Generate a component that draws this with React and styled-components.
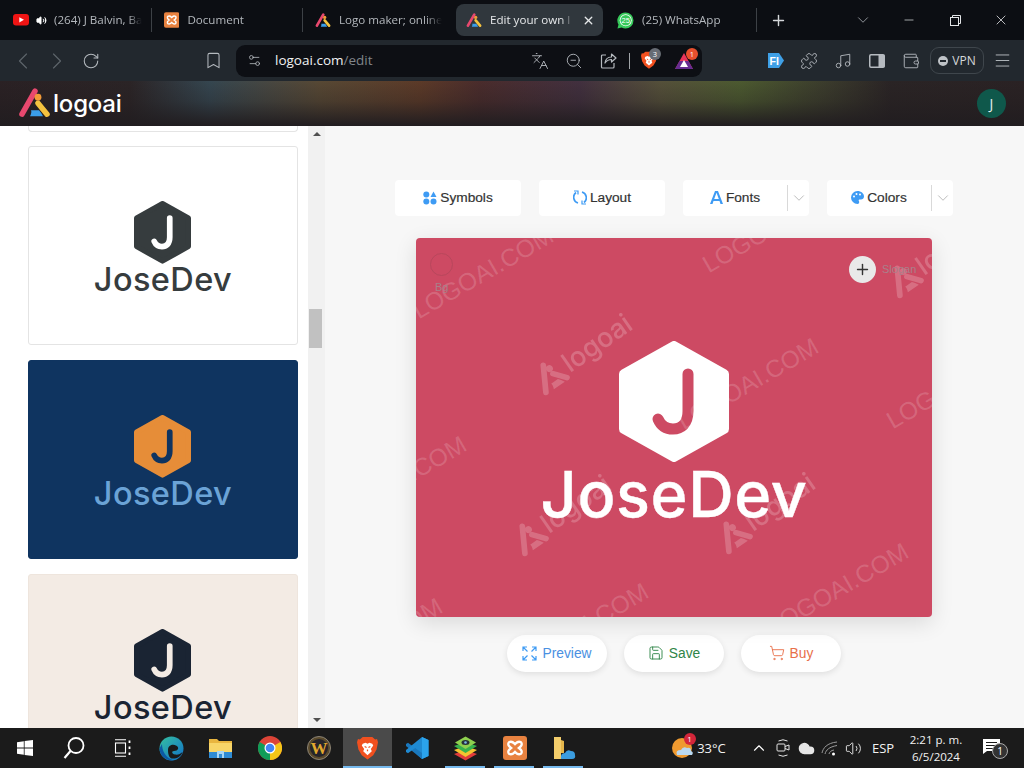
import React from "react";
import styled, { createGlobalStyle } from "styled-components";
import {
  ChevronLeft, ChevronRight, RotateCw, Bookmark, Settings2, Languages, ZoomOut, Puzzle, Music,
  Wallet, Menu, Plus, ChevronDown, Minus, X, Save, ShoppingCart, ChevronUp, Cloud, Volume2,
} from "lucide-react";

const Global = createGlobalStyle`
  html, body { margin: 0; padding: 0; background: #111; }
  * { box-sizing: border-box; }
  body { font-family: "Open Sans", "Liberation Sans", sans-serif; }
`;

const Page = styled.div`
  width: 1024px; height: 768px; display: flex; flex-direction: column; overflow: hidden;
`;

/* ---------- tab strip ---------- */
const TabBar = styled.div`
  height: 40px; flex: none; background: #0c0e13; display: flex; align-items: center; color: #b9bdc2;
`;
const Tab = styled.div`
  position: relative; height: 32px; flex: none; width: ${p => p.$w}px; padding-left: ${p => p.$pad}px;
  display: flex; align-items: center; gap: 8px; font-size: 11.6px; border-radius: 8px;
  background: ${p => (p.$active ? "#30373d" : "transparent")};
  color: ${p => (p.$active ? "#e6e8ea" : "#b4b8bd")};
  ${p => p.$sep && `&::after { content: ""; position: absolute; right: 0; top: 4px; bottom: 4px; width: 1px; background: #3d4146; }`}
`;
const TabTitle = styled.span`
  white-space: nowrap; overflow: hidden; width: ${p => p.$w}px; margin-top: -2px;
  mask-image: linear-gradient(to right, #000 84%, transparent);
`;
const Speaker = styled.span`display: flex; margin-left: -1px; margin-right: -1px;`;
const TabClose = styled.span`display: flex; color: #e6e8ea; margin-left: 0;`;
const PlusSlot = styled.div`
  width: 42px; flex: none; display: flex; justify-content: center; color: #d5d7da;
`;
const WinControls = styled.div`margin-left: auto; display: flex; color: #dfe1e3;`;
const WinButton = styled.div`
  width: 46px; height: 40px; display: flex; align-items: center; justify-content: center;
  color: ${p => (p.$dim ? "#a9adb2" : "#e4e6e8")};
`;

/* ---------- browser toolbar ---------- */
const Toolbar = styled.div`
  height: 41px; flex: none; background: #22282e; display: flex; align-items: center; padding-left: 6px; color: #b5babf;
`;
const IconSlot = styled.div`
  width: 34px; height: 32px; flex: none; display: flex; align-items: center; justify-content: center;
  color: ${p => (p.$dim ? "#5d646a" : "inherit")};
`;
const BookmarkSlot = styled(IconSlot)`margin-left: 88px;`;
const UrlBar = styled.div`
  width: 466px; height: 32px; margin-left: 6px; flex: none; background: #0d0f14; border-radius: 9px;
  display: flex; align-items: center; padding-left: 1px; position: relative;
`;
const UrlText = styled.div`font-size: 13.5px; color: #f1f2f3; margin: -2px 0 0 4px; flex: 1;`;
const UrlPath = styled.span`color: #80858a;`;
const UrlDivider = styled.div`width: 1px; height: 16px; background: #a0a4a8; margin: 0 1px 0 4px;`;
const BadgeWrap = styled.div`position: relative; width: 35px; height: 32px; display: flex; align-items: center; justify-content: center; flex: none;`;
const CountBadge = styled.span`
  position: absolute; top: 3px; right: ${p => p.$r}px; width: 12px; height: 12px; border-radius: 50%;
  background: ${p => p.$bg}; color: #fff; font-size: 7.5px; line-height: 12px; text-align: center;
`;
const UrlEnd = styled.div`width: 1px; flex: none;`;
const ToolRight = styled.div`margin-left: auto; display: flex; align-items: center; padding-right: 5px;`;
const VpnPill = styled.div`
  width: 54px; height: 27px; margin: 0 1px 0 2px; border: 1px solid #3f464c; border-radius: 9px; display: flex; align-items: center;
  justify-content: center; gap: 4px; font-size: 12px; color: #d6d8da;
`;
const VpnDot = styled.span`
  width: 10px; height: 10px; border-radius: 50%; background: #bfc3c7; display: flex; align-items: center; justify-content: center;
  &::after { content: ""; width: 6px; height: 2px; background: #22282e; }
`;

/* ---------- site header ---------- */
const SiteHeader = styled.header`
  height: 45px; flex: none; display: flex; align-items: center; justify-content: space-between;
  padding: 0 18px 0 18px;
  background:
    linear-gradient(to bottom, rgba(30,26,28,0) 0%, rgba(30,26,28,.25) 45%, #211d20 100%),
    linear-gradient(to right, #2a2124 0%, #2b2426 130px, #354650 210px, #574834 320px, #5c3a28 420px, #4a2c2c 480px, #42303f 580px, #55503a 660px, #4c5a30 740px, #3a3a2c 830px, #2a2425 890px, #2a2224 100%);
`;
const Brand = styled.div`display: flex; align-items: center; gap: 2px;`;
const BrandName = styled.span`
  font-family: Inter, sans-serif; font-size: 24px; font-weight: 500; color: #fff; line-height: 1; letter-spacing: -.2px; margin-top: 2px;
`;
const Avatar = styled.div`
  width: 29px; height: 29px; border-radius: 50%; background: #0f584b; color: #e8f0ee; font-size: 14px;
  display: flex; align-items: center; justify-content: center;
`;

/* ---------- main area ---------- */
const Main = styled.main`flex: 1; min-height: 0; display: flex; overflow: hidden; background: #f7f7f7;`;
const Sidebar = styled.aside`
  width: 308px; flex: none; background: #fff; padding-left: 28px; display: flex; flex-direction: column; gap: 15px;
`;
const ClippedCard = styled.div`
  width: 270px; height: 6px; margin-bottom: -1px; flex: none; border: 1px solid #e4e4e4; border-top: 0; border-radius: 0 0 4px 4px; background: #fff;
`;
const Card = styled.div`
  width: 270px; height: 199px; flex: none; border-radius: 3px; display: flex; align-items: center; justify-content: center;
  background: ${p => p.$bg}; border: 1px solid ${p => p.$border};
`;
const Scrollbar = styled.div`
  width: 17px; flex: none; background: #f1f1f1; display: flex; flex-direction: column; align-items: center; justify-content: space-between;
  position: relative;
`;
const ScrollArrow = styled.div`
  width: 0; height: 0; margin: 6px 0; border-left: 4px solid transparent; border-right: 4px solid transparent;
  ${p => (p.$down ? "border-top: 4px solid #505050;" : "border-bottom: 4px solid #505050;")}
`;
const ScrollThumb = styled.div`
  position: absolute; top: 183px; left: 1px; width: 13px; height: 39px; background: #c1c1c1;
`;
const Editor = styled.section`
  flex: 1; display: flex; flex-direction: column; align-items: center; padding-top: 54px;
`;
const ToolRow = styled.div`display: flex; gap: 18px; margin-left: -1px;`;
const ToolBtn = styled.div`
  width: 126px; height: 36px; background: #fff; border-radius: 4px; display: flex; align-items: center;
  font-family: "Liberation Sans", sans-serif; font-size: 13.7px; color: #333; -webkit-text-stroke: .2px #333;
`;
const ToolLabel = styled.div`flex: 1; display: flex; align-items: center; justify-content: center; gap: 3px; padding-bottom: 1px;`;
const ToolCaret = styled.div`
  width: 22px; height: 26px; border-left: 1px solid #d9d9d9; display: flex; align-items: center; justify-content: center; color: #b5b5b5;
`;
const Canvas = styled.div`
  position: relative; width: 516px; height: 379px; margin: 22px 0 18px -1px; background: #cd4a63; border-radius: 4px; overflow: hidden;
  display: flex; align-items: center; justify-content: center;
  box-shadow: 0 6px 22px rgba(0,0,0,.12);
`;
const WatermarkText = styled.span`
  position: absolute; left: ${p => p.$x}px; top: ${p => p.$y}px; font-family: "Liberation Sans", sans-serif; font-size: 24.5px;
  color: rgba(255,255,255,.17); transform: rotate(-30deg); transform-origin: 0 100%; white-space: nowrap; line-height: 1;
`;
const WatermarkLogo = styled.div`
  position: absolute; left: ${p => p.$x}px; top: ${p => p.$y}px; display: flex; align-items: center; gap: 1px; opacity: .2;
  transform: rotate(-35deg); transform-origin: 0 100%; color: #fff; font-family: Inter, sans-serif; font-weight: 500; font-size: 27px; line-height: 1; white-space: nowrap;
`;
const BgSwatch = styled.div`
  position: absolute; left: 14px; top: 15px; width: 23px; height: 23px; border-radius: 50%; border: 1px solid #b8475c;
`;
const BgLabel = styled.span`
  position: absolute; left: 19px; top: 43px; font-family: "Liberation Sans", sans-serif; font-size: 11px; color: #a9808a;
`;
const AddCircle = styled.div`
  position: absolute; left: 433px; top: 18px; width: 27px; height: 27px; border-radius: 50%; background: #e9e9e9; color: #333;
  display: flex; align-items: center; justify-content: center;
`;
const SloganLabel = styled.span`
  position: absolute; left: 466px; top: 25px; font-family: "Liberation Sans", sans-serif; font-size: 11px; color: #a9808a;
`;
const ActionRow = styled.div`display: flex; gap: 17px; margin-left: -1px;`;
const ActionBtn = styled.div`
  width: 100px; height: 37px; border-radius: 19px; background: #fff; box-shadow: 0 2px 6px rgba(0,0,0,.1);
  display: flex; align-items: center; justify-content: center; gap: 5px; padding-bottom: 1px;
  font-family: "Liberation Sans", sans-serif; font-size: 13.8px; color: ${p => p.$c};
`;

/* ---------- logo ---------- */
const LogoBox = styled.div`display: flex; flex-direction: column; align-items: center; padding-top: ${p => p.$pt}px;`;
const LogoName = styled.div`
  font-family: Inter, sans-serif; font-weight: 500; color: ${p => p.$c}; font-size: ${p => p.$size}px; line-height: ${p => p.$lh}px;
  letter-spacing: ${p => p.$ls}px; -webkit-text-stroke: ${p => p.$stroke}px ${p => p.$c}; white-space: nowrap;
`;

const Hex = ({ w, fill, j }) => (
  <svg width={w} height={w * 1.1} viewBox="0 0 110 121">
    <polygon points="55,5 105,33 105,88 55,116 5,88 5,33" fill={fill} stroke={fill} strokeWidth="10" strokeLinejoin="round" />
    <path d="M69 33V70C69 83 62 88 54 88C47 88 42 85 39 78" fill="none" stroke={j} strokeWidth="11" strokeLinecap="round" />
  </svg>
);
const Logo = ({ hexW, fill, j, text, size, lh, ls, stroke, pt }) => (
  <LogoBox $pt={pt}>
    <Hex w={hexW} fill={fill} j={j} />
    <LogoName $c={text} $size={size} $lh={lh} $ls={ls} $stroke={stroke}>JoseDev</LogoName>
  </LogoBox>
);

/* ---------- drawn icons ---------- */
const LogoMark = ({ w = 16, mono }) => (
  <svg width={w} height={w * 0.92} viewBox="0 0 33 30">
    <path d="M17 3 4 26" stroke={mono || "#e8486e"} strokeWidth="5.5" strokeLinecap="round" />
    <path d="M13 22Q14 24 12 28H25Q23 24 21 22Z" fill={mono || "#3b9de8"} />
    <path d="M20 15 29 26" stroke={mono || "#f4c23f"} strokeWidth="5.5" strokeLinecap="round" />
    <circle cx="20" cy="9" r="3.4" fill={mono || "#f29a38"} />
  </svg>
);
const YouTube = () => (
  <svg width="16" height="12" viewBox="0 0 16 12"><rect width="16" height="11.5" rx="3" fill="#f01414" /><path d="M6.3 3.2 11 5.8 6.3 8.4Z" fill="#fff" /></svg>
);
const Xampp = ({ s = 16 }) => (
  <svg width={s} height={s} viewBox="0 0 16 16">
    <rect width="16" height="16" rx="2" fill="#e88240" />
    <path d="M4 4.2C6 3 7 4.4 8 5.4 9 4.4 10 3 12 4.2 13.2 5.6 12 7 10.6 8 12 9 13.2 10.4 12 11.8 10 13 9 11.6 8 10.6 7 11.6 6 13 4 11.8 2.8 10.4 4 9 5.4 8 4 7 2.8 5.6 4 4.2Z" fill="none" stroke="#fff" strokeWidth="1.5" />
  </svg>
);
const WhatsApp = () => (
  <svg width="17" height="17" viewBox="0 0 17 17">
    <path d="M8.5 .5a8 8 0 0 1 0 16c-1.4 0-2.6-.3-3.8-1L.5 16.5l1-4A8 8 0 0 1 8.5.5Z" fill="#36c95a" />
    <circle cx="8.7" cy="8.3" r="6" fill="#fff" /><circle cx="8.7" cy="8.3" r="5.2" fill="#36c95a" />
    <text x="8.7" y="11" fontSize="7.5" fill="#fff" textAnchor="middle" fontFamily="Liberation Sans">25</text>
  </svg>
);
const BraveIcon = ({ s = 16 }) => (
  <svg width={s} height={s * 1.14} viewBox="0 0 22 25">
    <path d="M6 1H16L19 3.5 21 3 22 6.5 20.5 14 17 20 11 24.5 5 20 1.500 14 0 6.500 1 3 3 3.500Z" fill="#f1501f" />
    <path d="M6 8 9 7 11 8 13 7 16 8 17 10 14.500 13.500 15.500 16 11 20 6.500 16 7.500 13.500 5 10Z" fill="#fff" />
    <path d="M8 11 10 12M14 11 12 12M11 14V16" stroke="#f1501f" strokeWidth="1.300" />
  </svg>
);
const Bat = () => (
  <svg width="18" height="16" viewBox="0 0 18 16">
    <path d="M9 0 18 16H0Z" fill="#e8345a" /><path d="M0 16 4.500 8 13.500 8 18 16Z" fill="#662d91" /><path d="M9 7 13 14H5Z" fill="#fff" />
  </svg>
);
const F1Ext = () => (
  <svg width="17" height="17" viewBox="0 0 17 17">
    <path d="M1 1H12L17 8.500 12 16H1Z" fill="#3fa0e6" />
    <text x="2.500" y="12.500" fontSize="10.500" fill="#fff" fontFamily="Liberation Sans" fontWeight="700">FI</text>
  </svg>
);
const PanelIcon = () => (
  <svg width="16" height="14" viewBox="0 0 16 14"><rect x=".75" y=".75" width="14.500" height="12.500" rx="1.200" fill="none" stroke="#b5babf" strokeWidth="1.500" /><rect x="9.500" y="1" width="6" height="12" fill="#b5babf" /></svg>
);
const ShareIcon = () => (
  <svg width="17" height="17" viewBox="0 0 17 17" fill="none" stroke="#b5babf" strokeWidth="1.200" strokeLinejoin="round">
    <path d="M6 3H2.500A1 1 0 0 0 1.500 4V15A1 1 0 0 0 2.500 16H13A1 1 0 0 0 14 15V11" />
    <path d="M5 11C5.500 7 8.500 5 11.500 5V2L16 6 11.500 10V7.500C9 7.500 6.800 8.500 5 11Z" />
  </svg>
);
const WinLogo = () => (
  <svg width="16" height="16" viewBox="0 0 16 16" fill="#fff"><path d="M0 2.300 6.800 1.300V7.600H0ZM7.600 1.100 16 0V7.600H7.600ZM0 8.400H6.800V14.700L0 13.700ZM7.600 8.400H16V16L7.600 14.900Z" /></svg>
);
const SearchGlyph = () => (
  <svg width="24" height="24" viewBox="0 0 24 24" fill="none" stroke="#fff" strokeWidth="1.800"><circle cx="14" cy="9.500" r="7.500" /><path d="M8.500 15 2.500 22" strokeWidth="2.200" /></svg>
);
const TaskView = () => (
  <svg width="18" height="18" viewBox="0 0 18 18" fill="none" stroke="#fff" strokeWidth="1.100"><path d="M1 .8H12M1 17.200H12" /><rect x="1.500" y="4" width="10" height="10" /><path d="M15.500 1.500V4M15.500 7.500V10M15.500 13.500V16" strokeWidth="1.800" /></svg>
);
const Edge = () => (
  <svg width="25" height="25" viewBox="0 0 25 25">
    <defs><linearGradient id="eg" x1="0" y1="0" x2="1" y2="1"><stop offset="0" stopColor="#35c1a0" /><stop offset="1" stopColor="#1170c9" /></linearGradient></defs>
    <circle cx="12.500" cy="12.500" r="12" fill="url(#eg)" />
    <path d="M3 8C3 14 6 22 15 24.500 6 25 .5 19 .5 12.500Z" fill="#0c59a4" />
    <path d="M9 14C9 9 14 8 17 9.500 21 11.500 19 15 15 15 12 15 13 18 16 18.500 19 19 21.500 18 23.500 16 22 21 17 23 13 22.500 10 22 9 18 9 14Z" fill="#1a1a1a" />
  </svg>
);
const Folder = () => (
  <svg width="23" height="22" viewBox="0 0 23 22">
    <path d="M0 2H8L10 4H23V21H0Z" fill="#e9b53f" /><rect y="6" width="23" height="15" fill="#f8d568" /><rect y="15" width="23" height="6" fill="#2f8bd4" /><rect x="8" y="14" width="7" height="7" fill="#a9d6f3" /><rect x="10" y="17" width="3" height="4" fill="#2f8bd4" />
  </svg>
);
const Chrome = () => (
  <svg width="24" height="24" viewBox="0 0 24 24">
    <circle cx="12" cy="12" r="12" fill="#dc4437" />
    <path d="M12 12 22.400 6A12 12 0 0 1 12 24Z" fill="#f5c518" /><path d="M12 12 12 24A12 12 0 0 1 1.600 6Z" fill="#0f9d58" />
    <circle cx="12" cy="12" r="5.500" fill="#fff" /><circle cx="12" cy="12" r="4.300" fill="#4285f4" />
  </svg>
);
const Wow = () => (
  <svg width="24" height="24" viewBox="0 0 24 24">
    <circle cx="12" cy="12" r="11.500" fill="#5a4a2c" stroke="#8c8476" strokeWidth="1" /><circle cx="12" cy="12" r="9" fill="#26242a" />
    <text x="12" y="18" fontSize="17" fontWeight="700" fontFamily="Liberation Serif" fill="#e2a92e" textAnchor="middle">W</text>
  </svg>
);
const VsCode = () => (
  <svg width="24" height="24" viewBox="0 0 24 24">
    <path d="M17 1 23.500 4V20L17 23 6 13 17 5Z" fill="#1f8ad2" /><path d="M17 1V23L23.500 20V4Z" fill="#2ba3ec" />
    <path d="M1 8 3 6.800 17 17V23L1 10Z" fill="#1a78bd" /><path d="M1 16 3 17.200 17 7V1L1 14Z" fill="#1f8ad2" />
  </svg>
);
const BlueStacks = () => (
  <svg width="25" height="25" viewBox="0 0 25 25">
    <path d="M12.500 14 24 18 12.500 24.500 1 18Z" fill="#e23b3b" /><path d="M12.500 10 24 14 12.500 21 1 14Z" fill="#f4c430" />
    <path d="M12.500 6 24 10 12.500 17 1 10Z" fill="#37b24d" /><path d="M12.500 .5 23 6.500 12.500 13 2 6.500Z" fill="#8fd14f" /><ellipse cx="12.500" cy="6.500" rx="4" ry="2.500" fill="#263238" /><circle cx="12.500" cy="6.500" r="1.300" fill="#7db7e8" />
  </svg>
);
const FilesApp = () => (
  <svg width="24" height="24" viewBox="0 0 24 24">
    <path d="M2 1H9V23H2Z" fill="#f3cd6b" /><path d="M9 4 12 5V17H9Z" fill="#e5b64b" />
    <path d="M9 23Q8 17 13 17 15 13 19 15 23 15 23 19 24 23 20 23Z" fill="#3b9de0" />
  </svg>
);
const Weather = () => (
  <svg width="24" height="24" viewBox="0 0 24 24">
    <circle cx="11" cy="12" r="10" fill="#ef9a30" /><path d="M6 19Q4 14 10 14 12 10 16 12 20 11 20 15 23 16 21 19Z" fill="#b9d8f0" />
  </svg>
);
const MeetIcon = () => (
  <svg width="14" height="20" viewBox="0 0 14 20" fill="none" stroke="#e4e4e4" strokeWidth="1"><path d="M2.500 3Q7 .5 11.500 3M2.500 17Q7 19.500 11.500 17" /><rect x="1" y="6" width="8" height="7" rx="1" /><path d="M9 8.500 13 7V12L9 10.500" /></svg>
);
const WifiGlyph = () => (
  <svg width="18" height="16" viewBox="0 0 18 16" fill="none" stroke="#9a9a9a" strokeWidth="1"><path d="M1 13C2 8 6 3 16 2M4 14C5 10 8 7 16 5.500M8 14C8.500 12 10 10.500 13 10" /><circle cx="12.500" cy="14" r="1.500" fill="#fff" stroke="none" /></svg>
);
const Notify = () => (
  <svg width="22" height="20" viewBox="0 0 22 20"><path d="M1 1H18V13H5L1 16Z" fill="#fff" /><path d="M4 4.500H15M4 7.500H15M4 10.500H11" stroke="#1a1a1a" strokeWidth="1" /></svg>
);

/* ---------- taskbar ---------- */
const Taskbar = styled.footer`
  height: 40px; flex: none; background: #1b1b1b; display: flex; align-items: stretch; color: #fff; font-family: "Open Sans", sans-serif;
`;
const TaskItem = styled.div`
  width: 49px; flex: none; display: flex; align-items: center; justify-content: center; position: relative;
  background: ${p => (p.$active ? "#4a4a4a" : "transparent")};
  ${p => p.$open && `&::after { content: ""; position: absolute; bottom: 0; height: 2px; background: #76b9ed; left: ${p.$active ? 0 : 4}px; right: ${p.$active ? 0 : 5}px; }`}
`;
const Tray = styled.div`margin-left: auto; display: flex; align-items: center;`;
const WeatherWrap = styled.div`position: relative; display: flex;`;
const WeatherBadge = styled.span`
  position: absolute; right: -1px; top: -3px; width: 12px; height: 12px; border-radius: 50%; background: #d3263a; color: #fff; font-size: 8px; line-height: 12px; text-align: center;
`;
const TrayText = styled.span`font-size: 13px; color: #f2f2f2; width: ${p => p.$w}px; text-align: center; flex: none;`;
const TraySlot = styled.div`
  width: 23.5px; flex: none; display: flex; justify-content: center; align-items: center; margin-left: ${p => p.$ml || 0}px;
`;
const Clock = styled.div`
  width: 68px; flex: none; font-size: 11.5px; line-height: 17px; text-align: center; color: #f2f2f2; margin-left: 1px;
`;
const NotifyWrap = styled.div`position: relative; width: 46px; display: flex; justify-content: center;`;
const NotifyCount = styled.span`
  position: absolute; right: 8px; top: 5px; width: 16px; height: 16px; border-radius: 50%; border: 1px solid #aaa; background: #333; font-size: 10px; line-height: 14px; text-align: center;
`;
const ShowDesktop = styled.div`width: 8px; height: 100%; flex: none;`;

const marks = [
  [5, 61], [295, 15], [270, 172], [479, 171],
  [-82, 270], [360, 377], [100, 417], [-106, 432],
];
const logoMarks = [[129, 129], [108, 290], [312, 288], [483, 32]];

const tools = [
  { label: "Symbols", icon: <svg width="14" height="14" viewBox="0 0 14 14" fill="#3e9bf4"><circle cx="3.300" cy="3.500" r="3" /><path d="M10.500 .5 13.500 6H7.500Z" /><circle cx="3.300" cy="10.500" r="3" /><circle cx="10.500" cy="10.500" r="3" /></svg> },
  { label: "Layout", icon: <svg width="14" height="15" viewBox="0 0 14 15" fill="none" stroke="#3e9bf4" strokeWidth="1.700"><path d="M3 2.500A6 6 0 0 0 5 13M11 12.500A6 6 0 0 0 9 2" /><path d="M1 1H5V4.500M13 14H9V10.500" strokeWidth="1.200" /></svg> },
  { label: "Fonts", caret: true, icon: <svg width="13" height="13" viewBox="0 0 13 13"><path d="M5 0H8L13 13H10.500L9.500 10H3.500L2.500 13H0ZM4.200 8H8.800L6.500 1.800Z" fill="#3e9bf4" /></svg> },
  { label: "Colors", caret: true, icon: <svg width="13" height="13" viewBox="0 0 13 13"><path d="M6.500 0C10 0 13 2.400 13 5.500 13 7.500 11.500 8.500 10 8.500H8.500C7.500 8.500 7.500 9.800 8 10.300 8.600 11.200 8 13 6.500 13A6.500 6.500 0 0 1 6.500 0Z" fill="#3e9bf4" /><circle cx="3" cy="5.500" r="1" fill="#fff" /><circle cx="5.500" cy="3" r="1" fill="#fff" /><circle cx="9" cy="3.500" r="1" fill="#fff" /></svg> },
];

export default function App() {
  return (
    <Page>
      <Global />
      <TabBar>
        <Tab $w={152} $pad={13} $sep>
          <YouTube />
          <Speaker><Volume2 size={11} fill="#fff" color="#fff" /></Speaker>
          <TabTitle $w={88}>(264) J Balvin, Ba</TabTitle>
        </Tab>
        <Tab $w={151} $pad={12} $sep><Xampp /><TabTitle $w={120}>Document</TabTitle></Tab>
        <Tab $w={153} $pad={12}><LogoMark /><TabTitle $w={103}>Logo maker; online l</TabTitle></Tab>
        <Tab $w={147} $pad={10} $active>
          <LogoMark /><TabTitle $w={84}>Edit your own l</TabTitle>
          <TabClose><X size={13} strokeWidth={2.5} /></TabClose>
        </Tab>
        <Tab $w={154} $pad={14} $sep><WhatsApp /><TabTitle $w={110}>(25) WhatsApp</TabTitle></Tab>
        <PlusSlot><Plus size={17} strokeWidth={2} /></PlusSlot>
        <WinControls>
          <WinButton $dim><ChevronDown size={18} strokeWidth={1.1} /></WinButton>
          <WinButton><Minus size={14} strokeWidth={1.2} /></WinButton>
          <WinButton>
            <svg width="11" height="11" viewBox="0 0 11 11" fill="none" stroke="#e4e6e8"><rect x=".5" y="2.500" width="8" height="8" /><path d="M2.500 2.500V.5H10.500V8.500H8.500" /></svg>
          </WinButton>
          <WinButton><X size={16} strokeWidth={1.2} /></WinButton>
        </WinControls>
      </TabBar>

      <Toolbar>
        <IconSlot $dim><ChevronLeft size={28} strokeWidth={1} /></IconSlot>
        <IconSlot $dim><ChevronRight size={28} strokeWidth={1} /></IconSlot>
        <IconSlot><RotateCw size={18} strokeWidth={1.4} /></IconSlot>
        <BookmarkSlot><Bookmark size={19} strokeWidth={1.3} /></BookmarkSlot>
        <UrlBar>
          <IconSlot><Settings2 size={15} strokeWidth={1.3} /></IconSlot>
          <UrlText>logoai.com<UrlPath>/edit</UrlPath></UrlText>
          <IconSlot><Languages size={18} strokeWidth={1.2} /></IconSlot>
          <IconSlot><ZoomOut size={18} strokeWidth={1.2} /></IconSlot>
          <IconSlot><ShareIcon /></IconSlot>
          <UrlDivider />
          <BadgeWrap><BraveIcon s={16} /><CountBadge $bg="#676c74" $r={5}>3</CountBadge></BadgeWrap>
          <BadgeWrap><Bat /><CountBadge $bg="#e8502e" $r={3}>1</CountBadge></BadgeWrap>
          <UrlEnd />
        </UrlBar>
        <ToolRight>
          <IconSlot><F1Ext /></IconSlot>
          <IconSlot><Puzzle size={18} strokeWidth={1.2} /></IconSlot>
          <IconSlot><Music size={18} strokeWidth={1.2} /></IconSlot>
          <IconSlot><PanelIcon /></IconSlot>
          <IconSlot><Wallet size={18} strokeWidth={1.2} /></IconSlot>
          <VpnPill><VpnDot />VPN</VpnPill>
          <IconSlot><Menu size={19} strokeWidth={1.2} /></IconSlot>
        </ToolRight>
      </Toolbar>

      <SiteHeader>
        <Brand><LogoMark w={33} /><BrandName>logoai</BrandName></Brand>
        <Avatar>J</Avatar>
      </SiteHeader>

      <Main>
        <Sidebar>
          <ClippedCard />
          <Card $bg="#fff" $border="#e4e4e4">
            <Logo hexW={57} fill="#363c3e" j="#fff" text="#363c3e" size={32.5} lh={31} ls={0.4} stroke={0} pt={5} />
          </Card>
          <Card $bg="#0f3460" $border="#0f3460">
            <Logo hexW={57} fill="#e68d38" j="#0f3460" text="#6ba3d6" size={32.5} lh={31} ls={0.4} stroke={0} pt={5} />
          </Card>
          <Card $bg="#f3ebe4" $border="#eee5dd">
            <Logo hexW={57} fill="#1a2433" j="#f3ebe4" text="#1a2433" size={32.5} lh={31} ls={0.4} stroke={0} pt={5} />
          </Card>
        </Sidebar>
        <Scrollbar>
          <ScrollArrow />
          <ScrollThumb />
          <ScrollArrow $down />
        </Scrollbar>
        <Editor>
          <ToolRow>
            {tools.map(t => (
              <ToolBtn key={t.label}>
                <ToolLabel>{t.icon}{t.label}</ToolLabel>
                {t.caret && <ToolCaret><ChevronDown size={18} strokeWidth={1.2} /></ToolCaret>}
              </ToolBtn>
            ))}
          </ToolRow>
          <Canvas>
            <Logo hexW={110} fill="#fff" j="#cd4a63" text="#fff" size={63} lh={64} ls={0.6} stroke={0.4} pt={11} />
            {marks.map(([x, y]) => <WatermarkText key={`${x}${y}`} $x={x} $y={y}>LOGOAI.COM</WatermarkText>)}
            {logoMarks.map(([x, y]) => (
              <WatermarkLogo key={`${x}${y}`} $x={x} $y={y}><LogoMark w={34} mono="#fff" />logoai</WatermarkLogo>
            ))}
            <BgSwatch />
            <BgLabel>Bg</BgLabel>
            <AddCircle><Plus size={17} strokeWidth={2} /></AddCircle>
            <SloganLabel>Slogan</SloganLabel>
          </Canvas>
          <ActionRow>
            <ActionBtn $c="#4a90e2">
              <svg width="15" height="15" viewBox="0 0 15 15" fill="none" stroke="#3e9bf4" strokeWidth="1.200"><path d="M1 5V1H5M1 1 5.500 5.500M14 5V1H10M14 1 9.500 5.500M1 10V14H5M1 14 5.500 9.500M14 10V14H10M14 14 9.500 9.500" /></svg>
              Preview
            </ActionBtn>
            <ActionBtn $c="#2f8548"><Save size={16} strokeWidth={1.4} />Save</ActionBtn>
            <ActionBtn $c="#e8704a"><ShoppingCart size={16} strokeWidth={1.4} />Buy</ActionBtn>
          </ActionRow>
        </Editor>
      </Main>

      <Taskbar>
        <TaskItem><WinLogo /></TaskItem>
        <TaskItem><SearchGlyph /></TaskItem>
        <TaskItem><TaskView /></TaskItem>
        <TaskItem><Edge /></TaskItem>
        <TaskItem><Folder /></TaskItem>
        <TaskItem><Chrome /></TaskItem>
        <TaskItem><Wow /></TaskItem>
        <TaskItem $active $open><BraveIcon s={21} /></TaskItem>
        <TaskItem><VsCode /></TaskItem>
        <TaskItem $open><BlueStacks /></TaskItem>
        <TaskItem $open><Xampp s={24} /></TaskItem>
        <TaskItem $open><FilesApp /></TaskItem>
        <Tray>
          <WeatherWrap><Weather /><WeatherBadge>1</WeatherBadge></WeatherWrap>
          <TrayText $w={34}>33°C</TrayText>
          <TraySlot $ml={19}><ChevronUp size={18} strokeWidth={1.5} /></TraySlot>
          <TraySlot><MeetIcon /></TraySlot>
          <TraySlot><Cloud size={17} fill="#e6e6e6" color="#e6e6e6" /></TraySlot>
          <TraySlot><WifiGlyph /></TraySlot>
          <TraySlot><Volume2 size={17} strokeWidth={1.2} /></TraySlot>
          <TrayText $w={36}>ESP</TrayText>
          <Clock>2:21 p. m.<br />6/5/2024</Clock>
          <NotifyWrap><Notify /><NotifyCount>1</NotifyCount></NotifyWrap>
          <ShowDesktop />
        </Tray>
      </Taskbar>
    </Page>
  );
}
